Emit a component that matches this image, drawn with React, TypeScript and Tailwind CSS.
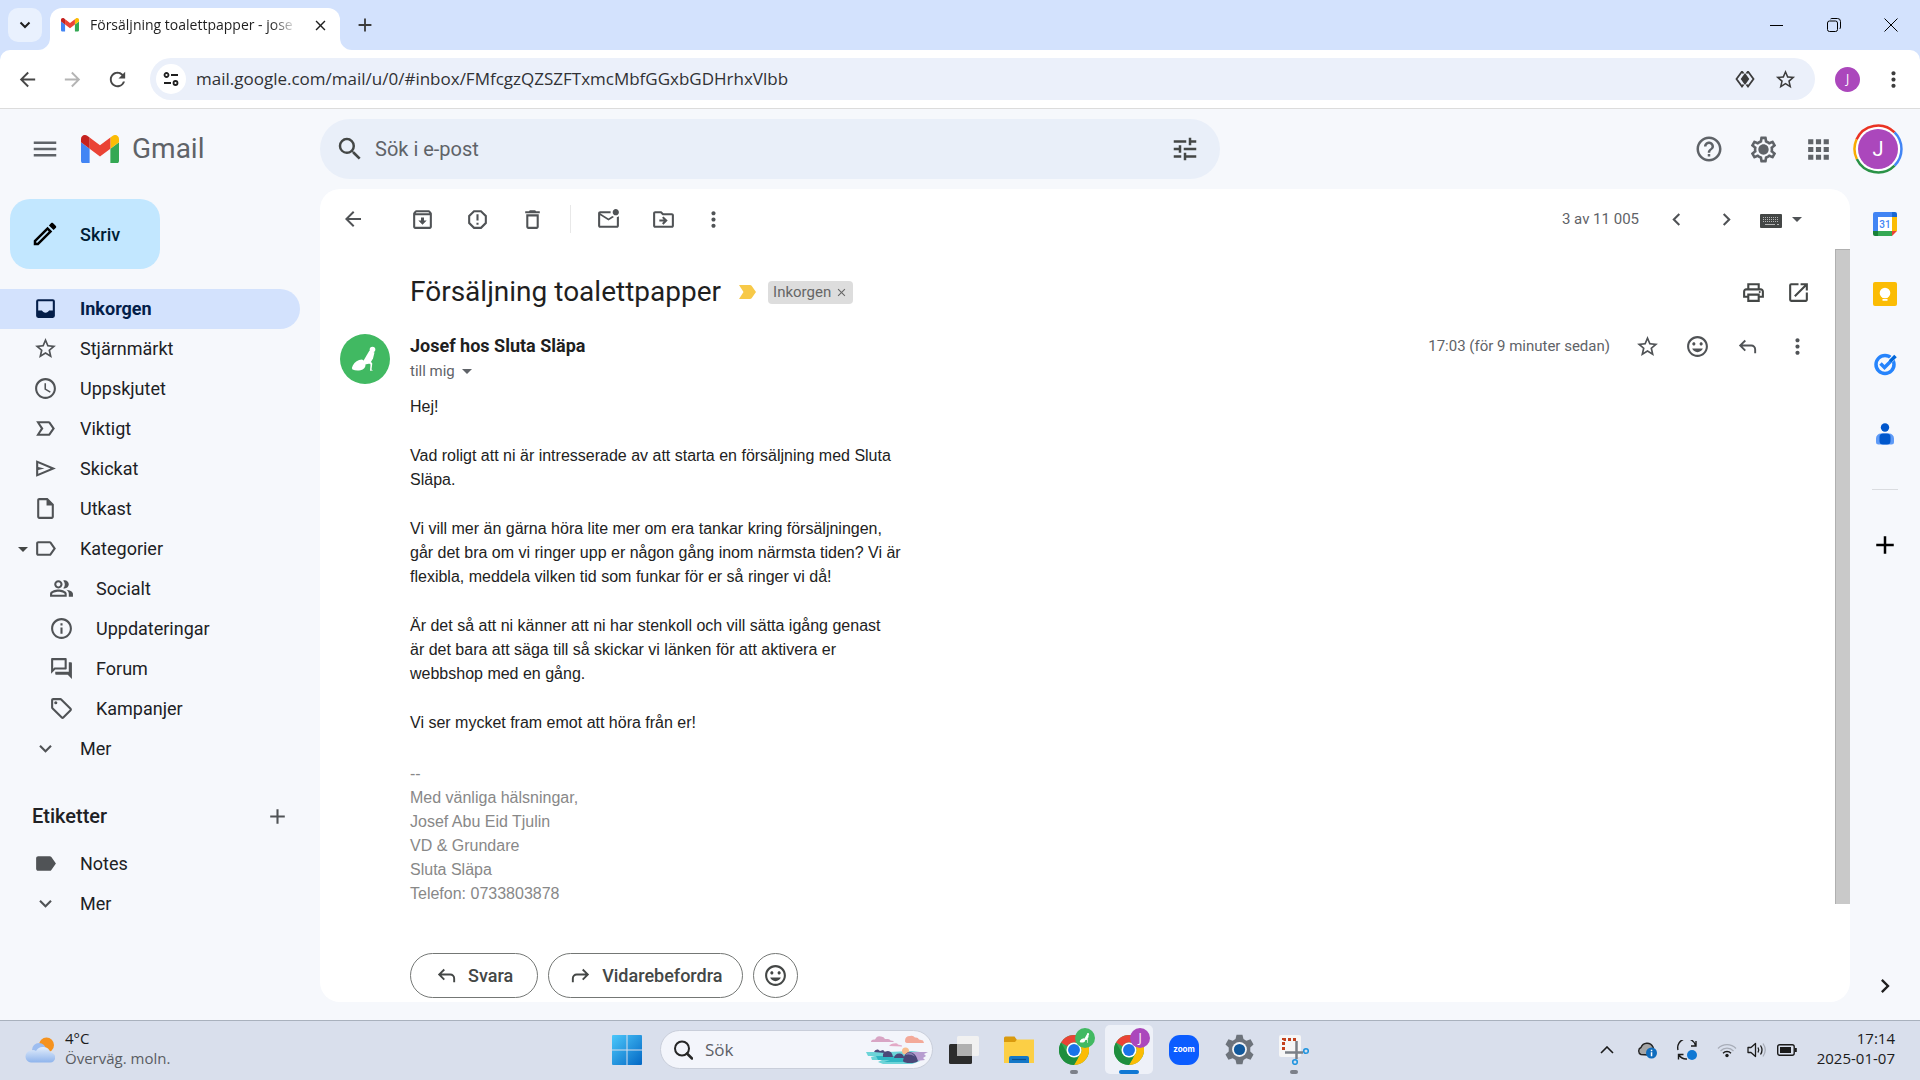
import React from 'react';
import { clsx } from 'clsx';
import type { IconType } from 'react-icons';
import {
  MdAdd,
  MdApps,
  MdArrowBack,
  MdArrowDropDown,
  MdArrowForward,
  MdChevronLeft,
  MdChevronRight,
  MdClose,
  MdDeleteOutline,
  MdExpandMore,
  MdHelpOutline,
  MdInbox,
  MdInfoOutline,
  MdLabel,
  MdLabelImportantOutline,
  MdLabelOutline,
  MdMenu,
  MdMood,
  MdMoreVert,
  MdOpenInNew,
  MdOutlineArchive,
  MdOutlineDriveFileMove,
  MdOutlineEdit,
  MdOutlineForum,
  MdOutlineLocalOffer,
  MdOutlineMarkEmailUnread,
  MdOutlinePeopleAlt,
  MdOutlinePrint,
  MdOutlineInsertDriveFile,
  MdOutlineSettings,
  MdRefresh,
  MdReportGmailerrorred,
  MdSchedule,
  MdSearch,
  MdStarBorder,
  MdTune,
} from 'react-icons/md';

interface IconProps {
  size?: number;
  className?: string;
}

// Hollow paper plane with the short centre bar
const SendOutline: React.FC<IconProps> = ({ size = 24, className }) => (
  <svg viewBox="0 0 24 24" width={size} height={size} fill="currentColor" className={className}>
    <path d="M3 20V4l19 8zm2-3l11.850-5L5 7v3.500l6 1.500-6 1.500z" />
  </svg>
);

// Tray filled around a cut-out, for the selected inbox
const InboxFilled: React.FC<IconProps> = ({ size = 24, className }) => (
  <svg viewBox="0 0 24 24" width={size} height={size} fill="currentColor" className={className}>
    <path
      fillRule="evenodd"
      d="M5 3h14a2 2 0 0 1 2 2v14a2 2 0 0 1-2 2H5a2 2 0 0 1-2-2V5a2 2 0 0 1 2-2zm0 2v9h3.560q.5.900 1.400 1.450T12 16t2.050-.55T15.450 14H19V5z"
    />
  </svg>
);

interface NavItem {
  label: string;
  icon: IconType | React.FC<IconProps>;
  active?: boolean;
  nested?: boolean;
  expandable?: boolean;
}

const navItems: NavItem[] = [
  { label: 'Inkorgen', icon: InboxFilled, active: true },
  { label: 'Stjärnmärkt', icon: MdStarBorder },
  { label: 'Uppskjutet', icon: MdSchedule },
  { label: 'Viktigt', icon: MdLabelImportantOutline },
  { label: 'Skickat', icon: SendOutline },
  { label: 'Utkast', icon: MdOutlineInsertDriveFile },
  { label: 'Kategorier', icon: MdLabelOutline, expandable: true },
  { label: 'Socialt', icon: MdOutlinePeopleAlt, nested: true },
  { label: 'Uppdateringar', icon: MdInfoOutline, nested: true },
  { label: 'Forum', icon: MdOutlineForum, nested: true },
  { label: 'Kampanjer', icon: MdOutlineLocalOffer, nested: true },
  { label: 'Mer', icon: MdExpandMore },
];

const labelItems: NavItem[] = [
  { label: 'Notes', icon: MdLabel },
  { label: 'Mer', icon: MdExpandMore },
];

const paragraphs: string[][] = [
  ['Hej!'],
  ['Vad roligt att ni är intresserade av att starta en försäljning med Sluta', 'Släpa.'],
  [
    'Vi vill mer än gärna höra lite mer om era tankar kring försäljningen,',
    'går det bra om vi ringer upp er någon gång inom närmsta tiden? Vi är',
    'flexibla, meddela vilken tid som funkar för er så ringer vi då!',
  ],
  [
    'Är det så att ni känner att ni har stenkoll och vill sätta igång genast',
    'är det bara att säga till så skickar vi länken för att aktivera er',
    'webbshop med en gång.',
  ],
  ['Vi ser mycket fram emot att höra från er!'],
];

const signature = [
  '--',
  'Med vänliga hälsningar,',
  'Josef Abu Eid Tjulin',
  'VD & Grundare',
  'Sluta Släpa',
  'Telefon: 0733803878',
];

interface IconButtonProps {
  label: string;
  className?: string;
  children: React.ReactNode;
}

const IconButton: React.FC<IconButtonProps> = ({ label, className, children }) => (
  <button aria-label={label} className={clsx('flex shrink-0 items-center justify-center', className)}>
    {children}
  </button>
);

const GmailLogo: React.FC<{ className?: string }> = ({ className }) => (
  <svg viewBox="52 42 88 66" className={className}>
    <path fill="#4285f4" d="M58 108h14V74L52 59v43c0 3.32 2.69 6 6 6" />
    <path fill="#34a853" d="M120 108h14c3.32 0 6-2.69 6-6V59l-20 15" />
    <path fill="#fbbc04" d="M120 48v26l20-15v-8c0-7.42-8.47-11.65-14.4-7.2" />
    <path fill="#ea4335" d="M72 74V48l24 18 24-18v26L96 92" />
    <path fill="#c5221f" d="M52 51v8l20 15V48l-5.6-4.2c-5.94-4.45-14.4-.22-14.4 7.2" />
  </svg>
);

const ReplyArrow: React.FC<{ className?: string }> = ({ className }) => (
  <svg viewBox="0 0 24 24" fill="currentColor" className={clsx('size-[23px]', className)}>
    <path d="M19 19v-4q0-1.25-.875-2.125T16 12H6.8l3.6 3.6L9 17l-6-6 6-6 1.4 1.4L6.8 10H16q2.075 0 3.538 1.463T21 15v4z" />
  </svg>
);

// Walking figure dragging a sack, used for the sender and for the browser profile badge
const SenderMark: React.FC<{ className?: string }> = ({ className }) => (
  <svg viewBox="0 0 50 50" className={className}>
    <circle cx="25" cy="25" r="25" fill="#41b962" />
    <g fill="#fff">
      <circle cx="32.500" cy="15.500" r="2.800" />
      <path d="M29.500 16.500l5 2-1.500 6-3 5-5 1-2-3z" />
      <path d="M22 25.500q3.500 1.500 3.500 5.500t-5 5.200q-4.500.8-8-.7-1-2 .3-4 3-5.500 9.200-6z" />
      <path d="M29.500 26l2.800 3.500-.8 6 1.500 1-3 .3.500-6.300-3-3z" />
    </g>
  </svg>
);

const ChromeLogo: React.FC = () => (
  <svg viewBox="0 0 48 48" className="size-[30px]">
    <circle cx="24" cy="24" r="24" fill="#34a853" />
    <path fill="#ea4335" d="M24 0a24 24 0 0 1 20.800 12H24a12 12 0 0 0-10.400 6L3.200 12A24 24 0 0 1 24 0z" />
    <path fill="#fbbc04" d="M44.800 12A24 24 0 0 1 24 48l10.400-18A12 12 0 0 0 34.400 18L31 12z" />
    <path fill="#1e8e3e" d="M3.200 12l10.400 18A12 12 0 0 0 24 36h7L24 48A24 24 0 0 1 3.200 12z" />
    <circle cx="24" cy="24" r="12" fill="#fff" />
    <circle cx="24" cy="24" r="9.500" fill="#1a73e8" />
  </svg>
);

const TabStrip: React.FC = () => (
  <div className="flex h-[50px] items-end justify-between bg-[#d3e2fd]">
    <div className="flex items-end">
      <IconButton label="Sök bland flikar" className="mb-2 ml-2 size-[34px] rounded-[10px] bg-[#e9f1fe]">
        <svg viewBox="0 0 12 12" className="size-3" fill="none" stroke="#1f1f1f" strokeWidth="2">
          <path d="M1.500 3.500L6 8l4.500-4.500" />
        </svg>
      </IconButton>
      <div className="relative ml-2 flex h-[42px] w-[290px] items-center rounded-t-[12px] bg-white pl-[11px] pb-2">
        <svg viewBox="0 0 12 12" className="absolute bottom-0 -left-3 size-3 fill-white">
          <path d="M0 12A12 12 0 0 0 12 0V12z" />
        </svg>
        <svg viewBox="0 0 12 12" className="absolute bottom-0 -right-3 size-3 fill-white">
          <path d="M12 12A12 12 0 0 1 0 0V12z" />
        </svg>
        <GmailLogo className="w-[18px]" />
        <span className="ml-[11px] w-[208px] shrink-0 whitespace-nowrap text-sm text-[#1f1f1f] [mask-image:linear-gradient(to_right,black_87%,transparent)]">
          Försäljning toalettpapper - jose
        </span>
        <IconButton label="Stäng flik" className="ml-3 size-5 text-[#1f1f1f]">
          <MdClose size={17} />
        </IconButton>
      </div>
      <IconButton label="Ny flik" className="mb-[13px] ml-[13px] size-6 text-[#3c3c3c]">
        <MdAdd size={22} />
      </IconButton>
    </div>
    <div className="flex h-[50px] items-center pr-px">
      <IconButton label="Minimera" className="w-[57px]">
        <span className="h-px w-[13px] bg-black" />
      </IconButton>
      <IconButton label="Återställ" className="w-[57px]">
        <svg viewBox="0 0 14 14" className="size-[14px]" fill="none" stroke="#000">
          <rect x="0.500" y="3" width="10" height="10.500" rx="2" />
          <path d="M3.500 1Q4 .5 5 .5h5.500a3 3 0 0 1 3 3V9q0 1.500-1 2" />
        </svg>
      </IconButton>
      <IconButton label="Stäng" className="w-[57px]">
        <svg viewBox="0 0 14 14" className="size-[14px]" fill="none" stroke="#000">
          <path d="M.5.5l13 13M13.500.5l-13 13" />
        </svg>
      </IconButton>
    </div>
  </div>
);

const AddressBar: React.FC = () => (
  <div className="bg-[#d3e2fd]">
    <div className="flex h-[59px] items-center rounded-t-[10px] border-b border-[#dcdcdc] bg-white pl-[5px] pr-1">
      <IconButton label="Tillbaka" className="w-[45px] text-[#474747]">
        <MdArrowBack size={23} />
      </IconButton>
      <IconButton label="Framåt" className="w-[45px] text-[#b4b4b4]">
        <MdArrowForward size={23} />
      </IconButton>
      <IconButton label="Läs in igen" className="w-[45px] text-[#474747]">
        <MdRefresh size={23} />
      </IconButton>
      <div className="ml-[10px] flex h-[42px] flex-1 items-center rounded-full bg-[#ebf0fa] pl-[6px] pr-[10px]">
        <IconButton label="Visa webbplatsinformation" className="size-[30px] rounded-full bg-white">
          <svg viewBox="0 0 16 16" className="size-4" fill="none" stroke="#1f1f1f" strokeWidth="1.800">
            <circle cx="3.500" cy="4" r="2" />
            <path d="M8 4h7M1 12h7" />
            <circle cx="12.500" cy="12" r="2" />
          </svg>
        </IconButton>
        <input
          aria-label="Adressfält"
          className="ml-[10px] min-w-0 flex-1 bg-transparent text-[17px] leading-6 text-[#303134] outline-none"
          defaultValue="mail.google.com/mail/u/0/#inbox/FMfcgzQZSZFTxmcMbfGGxbGDHrhxVlbb"
        />
        <IconButton label="Sök med Google Lens" className="w-10">
          <svg viewBox="0 0 20 20" className="size-5" fill="none" stroke="#3c3c3c" strokeWidth="1.800">
            <path d="M7 2.500L1.500 10 7 17.500l1.500-2M7 2.500l1.500 2M13 2.500l5.500 7.500-5.500 7.500-1.500-2M13 2.500l-1.500 2" />
            <path fill="#3c3c3c" d="M10 5.500l3.200 4.500-3.200 4.500L6.800 10z" />
          </svg>
        </IconButton>
        <IconButton label="Skapa ett bokmärke" className="w-10 text-[#3c3c3c]">
          <MdStarBorder size={23} />
        </IconButton>
      </div>
      <IconButton label="Profil" className="ml-[20px] size-[25px] rounded-full bg-[#ab47bc] text-xs text-white">
        J
      </IconButton>
      <IconButton label="Anpassa Chrome" className="ml-[10px] w-[46px] text-[#3c3c3c]">
        <MdMoreVert size={25} />
      </IconButton>
    </div>
  </div>
);

const MailHeader: React.FC = () => (
  <header className="flex h-20 shrink-0 items-center text-[#5f6368]">
    <div className="flex w-[320px] shrink-0 items-center pl-[30px]">
      <IconButton label="Huvudmeny">
        <MdMenu size={30} />
      </IconButton>
      <a href="#inbox" className="ml-[21px] flex items-center gap-[13px]">
        <GmailLogo className="w-[38px]" />
        <span className="text-[28px] leading-8">Gmail</span>
      </a>
    </div>
    <div className="flex h-[60px] max-w-[900px] flex-1 items-center gap-[10px] rounded-full bg-[#e9eff9] pl-[15px] pr-[20px]">
      <MdSearch size={30} className="text-[#444746]" />
      <input
        aria-label="Sök i e-post"
        placeholder="Sök i e-post"
        className="min-w-0 flex-1 bg-transparent text-xl outline-none placeholder:text-[#5f6368]"
      />
      <IconButton label="Visa sökalternativ" className="text-[#444746]">
        <MdTune size={30} />
      </IconButton>
    </div>
    <div className="ml-auto flex items-center pr-[17px]">
      <IconButton label="Support" className="w-[55px]">
        <MdHelpOutline size={30} />
      </IconButton>
      <IconButton label="Inställningar" className="relative w-[55px]">
        <MdOutlineSettings size={31} />
        <span className="absolute size-2 rounded-full bg-[#5f6368]" />
      </IconButton>
      <IconButton label="Google-appar" className="w-[55px]">
        <MdApps size={31} />
      </IconButton>
      <button
        aria-label="Google-konto"
        className="relative ml-[7px] flex size-[50px] items-center justify-center rounded-full text-xl text-white"
      >
        <svg viewBox="0 0 50 50" className="absolute size-[50px]" fill="none" strokeWidth="2.500">
          <circle cx="25" cy="25" r="22" fill="#fff" />
          <circle cx="25" cy="25" r="20" fill="#ab47bc" />
          <path stroke="#ea3323" d="M3.500 15.500A23.500 23.500 0 0 1 41.600 8.400" />
          <path stroke="#4285f4" d="M41.600 8.400A23.500 23.500 0 0 1 41.600 41.600" />
          <path stroke="#2a9246" d="M41.600 41.600A23.500 23.500 0 0 1 3.800 35" />
          <path stroke="#f9ab00" d="M3.800 35A23.500 23.500 0 0 1 3.500 15.500" />
        </svg>
        <span className="relative">J</span>
      </button>
    </div>
  </header>
);

const NavRow: React.FC<{ item: NavItem }> = ({ item }) => {
  const Icon = item.icon;
  return (
    <a
      href="#inbox"
      className={clsx(
        'relative flex h-10 w-[300px] items-center gap-[22px] rounded-r-full pb-px text-[18px]',
        item.nested ? 'pl-[49px]' : 'pl-[33px]',
        item.active ? 'bg-[#d3e2fd] font-bold text-[#041e49]' : 'text-[#202124]'
      )}
    >
      {item.expandable && <MdArrowDropDown size={24} className="absolute left-[11px] text-[#444746]" />}
      <Icon size={25} className={item.active ? 'text-[#041e49]' : 'text-[#505356]'} />
      {item.label}
    </a>
  );
};

const Sidebar: React.FC = () => (
  <aside className="w-[320px] shrink-0 pt-[10px]">
    <button className="ml-[10px] flex h-[70px] w-[150px] items-center gap-5 rounded-[20px] bg-[#c2e7ff] pl-5 text-[18px] font-medium text-[#001d35]">
      <MdOutlineEdit size={30} className="text-black" />
      Skriv
    </button>
    <nav className="mt-5">
      {navItems.map((item) => (
        <NavRow key={item.label} item={item} />
      ))}
    </nav>
    <div className="mt-[27px] mb-2 flex h-10 items-center justify-between pr-[30px] pl-8">
      <h2 className="text-xl font-medium text-[#202124]">Etiketter</h2>
      <IconButton label="Skapa ny etikett" className="text-[#505356]">
        <MdAdd size={25} />
      </IconButton>
    </div>
    <nav>
      {labelItems.map((item) => (
        <NavRow key={item.label} item={item} />
      ))}
    </nav>
  </aside>
);

const MessageToolbar: React.FC = () => (
  <div className="flex h-[60px] shrink-0 items-center pl-[5px] pr-[41px] text-[#505356]">
    <IconButton label="Tillbaka till Inkorgen" className="mr-[15px] w-[55px]">
      <MdArrowBack size={24} />
    </IconButton>
    <IconButton label="Arkivera" className="w-[55px]">
      <MdOutlineArchive size={25} />
    </IconButton>
    <IconButton label="Rapportera som skräppost" className="w-[55px]">
      <MdReportGmailerrorred size={25} />
    </IconButton>
    <IconButton label="Radera" className="w-[55px]">
      <MdDeleteOutline size={25} />
    </IconButton>
    <span className="mx-[10px] h-7 w-px bg-[#e8e8e8]" />
    <IconButton label="Markera som oläst" className="w-[55px]">
      <MdOutlineMarkEmailUnread size={25} />
    </IconButton>
    <IconButton label="Flytta till" className="w-[55px]">
      <MdOutlineDriveFileMove size={25} />
    </IconButton>
    <IconButton label="Fler e-postalternativ" className="w-[45px]">
      <MdMoreVert size={25} />
    </IconButton>
    <span className="ml-auto mr-3 text-[15px] text-[#5f6368]">3 av 11 005</span>
    <IconButton label="Nyare" className="w-[50px]">
      <MdChevronLeft size={25} />
    </IconButton>
    <IconButton label="Äldre" className="w-[50px]">
      <MdChevronRight size={25} />
    </IconButton>
    <IconButton label="Välj inmatningsverktyg" className="ml-[9px] gap-[3px]">
      <svg viewBox="0 0 22 14" className="mt-[3px] h-[14px] w-[22px]">
        <rect width="22" height="14" rx="1" fill="#444746" />
        <path stroke="#b5b5b5" strokeDasharray="1 1" d="M3 3.500h16M3 5.500h16M3 7.500h16" />
        <path stroke="#b5b5b5" d="M5 10.500h10M17 10.500h2" />
      </svg>
      <MdArrowDropDown size={24} />
    </IconButton>
  </div>
);

const Message: React.FC = () => (
  <article className="min-w-0 flex-1 pt-[15px]">
    <div className="flex h-14 items-center pl-[90px] pr-[14px]">
      <h1 className="text-[28px] leading-9 text-[#1f1f1f]">Försäljning toalettpapper</h1>
      <svg viewBox="0 0 17 14" className="ml-[18px] h-[14px] w-[17px]" fill="#f7c948">
        <path d="M0 0h11q1 0 1.600.8L17 7l-4.400 6.200q-.6.8-1.600.8H0l4.500-7z" />
      </svg>
      <span className="ml-3 flex h-[23px] items-center gap-1 rounded bg-[#dddddd] px-[5px] text-[15px] text-[#666666]">
        Inkorgen
        <button aria-label="Ta bort etiketten Inkorgen">
          <MdClose size={13} />
        </button>
      </span>
      <IconButton label="Skriv ut" className="ml-auto w-[45px] text-[#444746]">
        <MdOutlinePrint size={25} />
      </IconButton>
      <IconButton label="I nytt fönster" className="w-[45px] text-[#444746]">
        <MdOpenInNew size={25} />
      </IconButton>
    </div>

    <div className="mt-[14px] flex pl-5 pr-[13px]">
      <SenderMark className="size-[50px] shrink-0" />
      <div className="ml-5 flex-1">
        <h3 className="text-[18px] leading-6 font-bold text-[#1f1f1f]">Josef hos Sluta Släpa</h3>
        <button className="flex h-[26px] items-center text-[15px] text-[#5f6368]">
          till mig
          <MdArrowDropDown size={24} />
        </button>
      </div>
      <div className="flex h-[25px] items-center text-[#505356]">
        <span className="mr-3 text-[15px] text-[#5f6368]">17:03 (för 9 minuter sedan)</span>
        <IconButton label="Stjärnmärk" className="w-[50px]">
          <MdStarBorder size={25} />
        </IconButton>
        <IconButton label="Lägg till reaktion" className="w-[50px]">
          <MdMood size={25} />
        </IconButton>
        <IconButton label="Svara" className="w-[50px]">
          <ReplyArrow />
        </IconButton>
        <IconButton label="Mer" className="w-[50px]">
          <MdMoreVert size={25} />
        </IconButton>
      </div>
    </div>

    <div className="mt-[11px] pl-[90px] font-['Liberation_Sans',sans-serif] text-base leading-6 text-[#222222]">
      <div className="space-y-[25px]">
        {paragraphs.map((lines) => (
          <p key={lines[0]} className="whitespace-pre-line">
            {lines.join('\n')}
          </p>
        ))}
      </div>
      <p className="mt-[27px] whitespace-pre-line text-[#888888]">{signature.join('\n')}</p>
    </div>

    <div className="mt-[47px] flex gap-[10px] pl-[90px] text-[18px] font-medium text-[#444746]">
      <button className="flex h-[45px] items-center gap-[10px] rounded-full border border-[#747775] px-6">
        <ReplyArrow />
        Svara
      </button>
      <button className="flex h-[45px] items-center gap-[10px] rounded-full border border-[#747775] px-5">
        <ReplyArrow className="-scale-x-100" />
        Vidarebefordra
      </button>
      <IconButton label="Lägg till emoji-reaktion" className="size-[45px] rounded-full border border-[#747775]">
        <MdMood size={25} />
      </IconButton>
    </div>
  </article>
);

const SidePanel: React.FC = () => (
  <aside className="flex w-[70px] shrink-0 flex-col items-center pt-[23px]">
    <IconButton label="Kalender" className="mb-[46px]">
      <svg viewBox="0 0 24 24" className="size-6">
        <path fill="#4285f4" d="M0 2a2 2 0 0 1 2-2h17v5H5v14H0z" />
        <path fill="#1967d2" d="M19 0h3a2 2 0 0 1 2 2v3h-5z" />
        <path fill="#fbbc04" d="M19 5h5v14h-5z" />
        <path fill="#188038" d="M0 19h5v5H2a2 2 0 0 1-2-2z" />
        <path fill="#34a853" d="M5 19h14v5H5z" />
        <path fill="#ea4335" d="M19 24v-5h5z" />
        <path fill="#fff" d="M5 5h14v14H5z" />
        <text x="12" y="15.500" textAnchor="middle" fontSize="10" fontWeight="500" fill="#4285f4">
          31
        </text>
      </svg>
    </IconButton>
    <IconButton label="Keep" className="mb-[46px]">
      <svg viewBox="0 0 24 24" className="size-6">
        <rect width="24" height="24" rx="2" fill="#fbbc04" />
        <circle cx="12" cy="11" r="5.300" fill="#fff" />
        <path fill="#fff" d="M9.500 14h5v2h-5zM9.500 17h5v1.800h-5z" />
      </svg>
    </IconButton>
    <IconButton label="Tasks" className="mb-[46px]">
      <svg viewBox="0 0 24 24" className="size-6" fill="none">
        <circle cx="12" cy="12.500" r="9" stroke="#2684fc" strokeWidth="3.500" />
        <path stroke="#fff" strokeWidth="5" d="M15 11l6-6" />
        <path stroke="#2684fc" strokeWidth="3.500" d="M7.500 11.500l4 4 6-6" />
        <path stroke="#0066da" strokeWidth="3.500" d="M17 9.500l5.500-5.500" />
      </svg>
    </IconButton>
    <IconButton label="Kontakter">
      <svg viewBox="0 0 24 24" className="size-6">
        <circle cx="12" cy="5.500" r="4.200" fill="#0057cc" />
        <path fill="#5f9bf7" d="M8 11.500h8a5 5 0 0 1 5 5V20a2.500 2.500 0 0 1-2.500 2.500h-13A2.500 2.500 0 0 1 3 20v-3.500a5 5 0 0 1 5-5z" />
        <rect x="6.500" y="11.500" width="11" height="11" rx="3.500" fill="#0057cc" />
      </svg>
    </IconButton>
    <span className="mt-[43px] h-px w-[26px] bg-[#dadce0]" />
    <IconButton label="Installera tillägg" className="mt-10 text-black">
      <MdAdd size={30} />
    </IconButton>
    <IconButton label="Dölj sidopanelen" className="mt-auto mb-[20px] text-[#1f1f1f]">
      <MdChevronRight size={28} />
    </IconButton>
  </aside>
);

interface TaskbarAppProps {
  label: string;
  active?: boolean;
  running?: boolean;
  children: React.ReactNode;
}

const TaskbarApp: React.FC<TaskbarAppProps> = ({ label, active, running, children }) => (
  <button
    aria-label={label}
    className={clsx(
      'relative flex h-[49px] w-12 items-center justify-center rounded-[5px]',
      active && 'bg-[#eef1f8]'
    )}
  >
    {children}
    {running && <span className="absolute bottom-0 h-1 w-2 rounded-full bg-[#7c8089]" />}
    {active && <span className="absolute bottom-0 h-1 w-5 rounded-full bg-[#0f78d4]" />}
  </button>
);

const Taskbar: React.FC = () => (
  <footer className="grid h-[60px] shrink-0 grid-cols-[1fr_auto_1fr] items-center border-t border-[#a9b1bd] bg-[#d9dfec] pb-[2px]">
    <button className="flex items-center gap-[10px] pl-[25px] text-left text-[15px] leading-5 text-[#5a5d63]">
      <svg viewBox="0 0 30 26" className="w-[30px]">
        <defs>
          <linearGradient id="cloud" x1="0" y1="0" x2="0" y2="1">
            <stop offset="0" stopColor="#e2edfb" />
            <stop offset="1" stopColor="#8fb4ec" />
          </linearGradient>
        </defs>
        <circle cx="21.500" cy="8" r="7.500" fill="#f5921e" />
        <circle cx="14" cy="13" r="7" fill="#9dbdf0" />
        <path fill="url(#cloud)" d="M6 25.500a6 6 0 0 1-.5-11.900A5 5 0 0 1 11 14a8 8 0 0 1 14.500 1.500A5 5 0 0 1 25 25.500z" />
      </svg>
      <span className="flex flex-col pb-[3px]">
        <span className="text-[#1b1b1b]">4°C</span>
        <span>Överväg. moln.</span>
      </span>
    </button>

    <div className="flex items-center gap-[7px] pl-[10px]">
      <button aria-label="Start" className="mr-[11px]">
        <svg viewBox="0 0 30 30" className="size-[30px]">
          <defs>
            <linearGradient id="win" x1="0" y1="0" x2="1" y2="1">
              <stop offset="0" stopColor="#4cc8fb" />
              <stop offset="1" stopColor="#0367c4" />
            </linearGradient>
          </defs>
          <path fill="url(#win)" d="M1 0h13.500v14.500H0V1a1 1 0 0 1 1-1zM15.500 0H29a1 1 0 0 1 1 1v13.500H15.500zM0 15.500h14.500V30H1a1 1 0 0 1-1-1zM15.500 15.500H30V29a1 1 0 0 1-1 1H15.500z" />
        </svg>
      </button>
      <label className="flex h-[39px] w-[273px] items-center rounded-full border border-[#c9ceda] bg-[#f3f5fb] pl-[12px] pr-1">
        <svg viewBox="0 0 20 20" className="size-5" fill="none" stroke="#262626" strokeWidth="2">
          <circle cx="9" cy="8.500" r="7" />
          <path strokeLinecap="round" strokeWidth="2.500" d="M14 13.500l5 5" />
        </svg>
        <input
          aria-label="Sök"
          placeholder="Sök"
          className="ml-3 w-0 flex-1 bg-transparent text-[17px] leading-6 outline-none placeholder:text-[#5d5f66]"
        />
        <svg viewBox="0 0 62 30" className="h-[30px] w-[62px]">
          <path fill="#d8a5c4" d="M5 7q0-3 4-2.500 2-4.500 6-3 3 0 4 2.500h3q2 0 2.500 1.500l3 .5v1z" />
          <path fill="#f3a999" d="M39 6q0-5 5-5 3-1 5 1.500 3-.5 4 2l4 1 1 2.500H42q-3 0-3-2z" />
          <path fill="#e3a9c6" d="M23 11q2-3 5-2.500 3-1 4 1l4 1v1z" />
          <path fill="#6cd4d8" d="M0 17h22l24-1 8 1-4 5 4 4-8 3H17l-5-2 4-2H6l-1-3 4-1H2z" />
          <path fill="#2fb6c3" d="M10 21h20l20 1-6 5H18l6-2H12z" />
          <path fill="#b79dd0" d="M43 17h19l-4 2 2 2-3 2 2 2-9 1z" />
          <circle cx="39.500" cy="16" r="3.500" fill="#f8bd8d" />
          <path fill="#4a4778" d="M8 17q1-3 4-2.500l2 1.500 3-1q2 1 2 3zM17 22q-1-6 5-6 4 0 5 6zM28 23q1-5 6-4.500 4 .5 4 4.500zM37 26q1-9 7-9 6 1 8 9-2 2-8 2-6 0-7-2z" />
          <path fill="#8a7db1" d="M39 20q2-3 5-2.500 3 .5 5 4-5-3-10-1.500z" />
        </svg>
      </label>
      <TaskbarApp label="Aktivitetsvyn">
        <svg viewBox="0 0 30 30" className="size-[30px]">
          <rect y="9" width="23" height="20" rx="1.500" fill="#2c2c2c" />
          <rect x="8" y="1" width="22" height="20" rx="1.500" fill="#f1f1f1" />
          <path fill="#b0b0b0" d="M8 9h15v12H8z" />
        </svg>
      </TaskbarApp>
      <TaskbarApp label="Utforskaren">
        <svg viewBox="0 0 30 28" className="w-[30px]">
          <path fill="#d99a0e" d="M0 2q0-1.500 1.500-1.500h9L13 4v4H0z" />
          <path fill="#fccf45" d="M0 6h11l2-2.500h17V27H0z" />
          <path fill="#1478c8" d="M5 22q0-2 2-2h16q2 0 2 2v5H5z" />
          <path stroke="#0b4f8c" strokeWidth="1.200" d="M8 23.500h14" />
        </svg>
      </TaskbarApp>
      <TaskbarApp label="Google Chrome, arbete" running>
        <ChromeLogo />
        <SenderMark className="absolute top-[3px] right-[3px] size-5" />
      </TaskbarApp>
      <TaskbarApp label="Google Chrome" active>
        <ChromeLogo />
        <span className="absolute top-[3px] right-[3px] flex size-5 items-center justify-center rounded-full bg-[#ab47bc] text-xs text-white">
          J
        </span>
      </TaskbarApp>
      <TaskbarApp label="Zoom">
        <span className="flex size-[30px] items-center justify-center rounded-[11px] bg-[#0b5cff] pb-[2px] font-['Inter',sans-serif] text-[8px] font-bold text-white">
          zoom
        </span>
      </TaskbarApp>
      <TaskbarApp label="Inställningar">
        <svg viewBox="1.500 1.500 21 21" className="size-[31px]">
          <path
            fill="#6d737b"
            d="M10 2h4l.7 2.900 1.900 1.100 2.900-.9 2 3.500-2.200 2v2.800l2.200 2-2 3.500-2.900-.9-1.900 1.100L14 22h-4l-.7-2.900L7.400 18l-2.900.9-2-3.500 2.200-2v-2.800l-2.200-2 2-3.500 2.900.9 1.900-1.100z"
          />
          <circle cx="12" cy="12" r="5" fill="#f2f4f7" />
          <circle cx="12" cy="12" r="3.800" fill="#12599c" />
        </svg>
      </TaskbarApp>
      <TaskbarApp label="Skärmklippverktyget" running>
        <svg viewBox="0 0 30 30" className="size-[30px]" fill="none">
          <rect width="22" height="22" rx="2" fill="#f6f6f6" />
          <path stroke="#c3401b" strokeWidth="3" strokeDasharray="3 2" d="M17 4.500H4.500V16" />
          <path stroke="#7b8087" strokeWidth="2.500" d="M17.500 6v18M6 17.500h18" />
          <circle cx="16" cy="27" r="2.300" stroke="#1f94df" strokeWidth="1.600" />
          <circle cx="27" cy="16" r="2.300" stroke="#1f94df" strokeWidth="1.600" />
        </svg>
      </TaskbarApp>
    </div>

    <div className="flex items-center justify-end pr-[25px] text-[#1b1b1b]">
      <IconButton label="Visa dolda ikoner" className="w-10">
        <svg viewBox="0 0 14 8" className="w-[14px]" fill="none" stroke="currentColor" strokeWidth="1.600">
          <path d="M1 7l6-6 6 6" />
        </svg>
      </IconButton>
      <IconButton label="OneDrive" className="w-10">
        <svg viewBox="0 0 20 18" className="w-5">
          <path fill="#a5a5a5" stroke="#222" strokeWidth="1.400" d="M4 13.500a3.800 3.800 0 0 1 0-7C6 1.500 13 .5 16 6l1 4-6 4z" />
          <circle cx="14.500" cy="12" r="5.500" fill="#0f6cbd" />
          <path fill="#fff" d="M13.800 11.200h1.500v4h-1.500zM13.800 8.700h1.500v1.500h-1.500z" />
        </svg>
      </IconButton>
      <IconButton label="Windows Update" className="w-10">
        <svg viewBox="0 0 20 20" className="size-5" fill="none" stroke="currentColor" strokeWidth="1.400">
          <path d="M1 10A9 9 0 0 1 18.500 5.500M19 1v5h-5M1.500 19.500v-5h5M2 15q3 4.500 8 4" />
          <circle cx="15" cy="15" r="5" fill="#0f78d4" stroke="none" />
        </svg>
      </IconButton>
      <button aria-label="Nätverk, ljud och batteri" className="ml-[10px] flex items-center gap-[10px]">
        <svg viewBox="0 0 20 16" className="w-5" fill="none" stroke="currentColor" strokeWidth="1.300">
          <path stroke="#a8adb8" d="M1 6.500a12.500 12.500 0 0 1 18 0M3.500 9a9 9 0 0 1 13 0" />
          <path d="M6 11.200a5.600 5.600 0 0 1 8 0" />
          <circle cx="10" cy="13.500" r="1.700" fill="currentColor" stroke="none" />
        </svg>
        <svg viewBox="0 0 20 16" className="w-5" fill="none" stroke="currentColor" strokeWidth="1.300">
          <path strokeLinejoin="round" d="M1 5.500h3l4.500-4v13L4 10.500H1z" />
          <path d="M11 5.500q1.500 2.500 0 5M13.500 3.500q3 4.500 0 9" />
          <path stroke="#a8adb8" d="M16 1.500q4.500 6.500 0 13" />
        </svg>
        <svg viewBox="0 0 20 12" className="w-5" fill="none" stroke="currentColor" strokeWidth="1.400">
          <rect x="0.700" y="0.700" width="16.500" height="10.600" rx="2" />
          <rect x="3" y="3" width="11" height="6" fill="currentColor" stroke="none" />
          <path strokeWidth="2" d="M18.800 4v4" />
        </svg>
      </button>
      <div className="ml-5 pb-[3px] text-right text-[15px] leading-5">
        <div>17:14</div>
        <div>2025-01-07</div>
      </div>
    </div>
  </footer>
);

const App: React.FC = () => {
  return (
    <div className="flex h-screen flex-col overflow-hidden bg-[#f6f8fc] font-['Open_Sans',sans-serif]">
      <TabStrip />
      <AddressBar />
      <div className="flex min-h-0 flex-1 flex-col font-[Roboto,sans-serif]">
        <MailHeader />
        <div className="flex min-h-0 flex-1">
          <Sidebar />
          <main className="mb-[18px] flex min-w-0 flex-1 flex-col overflow-hidden rounded-[20px] bg-white">
            <MessageToolbar />
            <div className="flex min-h-0 flex-1">
              <Message />
              <div className="w-[15px] shrink-0">
                <div className="h-[87%] border-t border-l border-[#b0b0b0] bg-[#c9c9c9]" />
              </div>
            </div>
          </main>
          <SidePanel />
        </div>
      </div>
      <Taskbar />
    </div>
  );
};

export default App;
